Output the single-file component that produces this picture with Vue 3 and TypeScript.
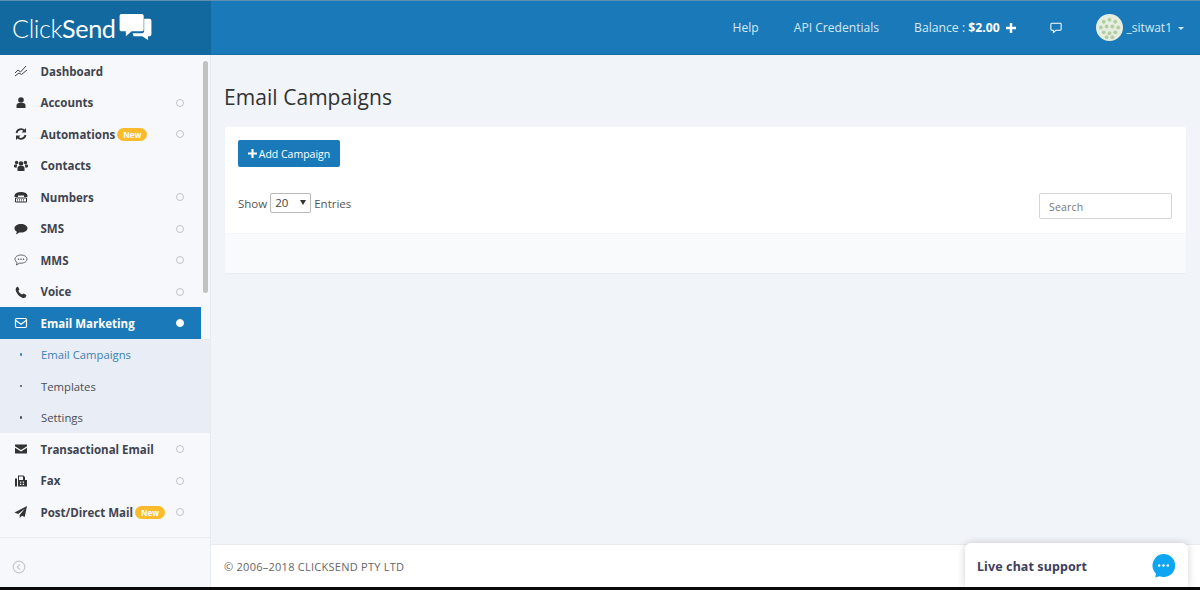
<script setup lang="ts">
interface NavItem {
  label: string
  icon: string
  dot?: boolean
  badge?: boolean
}

const topItems: NavItem[] = [
  { label: 'Dashboard', icon: 'chart' },
  { label: 'Accounts', icon: 'user', dot: true },
  { label: 'Automations', icon: 'refresh', dot: true, badge: true },
  { label: 'Contacts', icon: 'users' },
  { label: 'Numbers', icon: 'phone-box', dot: true },
  { label: 'SMS', icon: 'bubble', dot: true },
  { label: 'MMS', icon: 'bubble-dots', dot: true },
  { label: 'Voice', icon: 'phone', dot: true },
]

const subItems = ['Email Campaigns', 'Templates', 'Settings']

const bottomItems: NavItem[] = [
  { label: 'Transactional Email', icon: 'envelope', dot: true },
  { label: 'Fax', icon: 'fax', dot: true },
  { label: 'Post/Direct Mail', icon: 'plane', dot: true, badge: true },
]

const avatarDots: [number, number][] = [
  [8, 8], [14, 6], [20, 8], [5, 14], [11, 13], [17, 13], [23, 14],
  [8, 19], [14, 20], [20, 19], [11, 24], [17, 24],
]
</script>

<template>
  <div class="page">
    <header class="topbar">
      <div class="brand">
        <span class="logo-text"><span class="thin">Click</span>Send</span>
        <svg class="logo-mark" viewBox="0 0 34 28" width="33" height="27">
          <path d="M26 5h5.500q2 0 2 2v14q0 2-2 2H30v4l-6-4h-9l-1-3h9q3 0 3-3z" fill="#fff" />
          <path d="M2.500 0h21q2 0 2 2v14q0 2-2 2H13l-6 5v-5H2.500q-2 0-2-2V2q0-2 2-2z" fill="#fff" />
        </svg>
      </div>
      <nav class="top-nav">
        <a class="help">Help</a>
        <a>API Credentials</a>
        <a class="balance"><span>Balance : <b>$2.00</b></span>
          <svg viewBox="0 0 10 10" width="10" height="10"><path d="M3.800 0h2.400v3.800H10v2.400H6.200V10H3.800V6.200H0V3.800h3.800z" fill="#fff" /></svg>
        </a>
        <svg class="msg" viewBox="0 0 14 13" width="12" height="12">
          <path d="M2 1h10q1 0 1 1v6q0 1-1 1H7l-3 3V9H2q-1 0-1-1V2q0-1 1-1z" fill="none" stroke="#fff" stroke-width="1.200" stroke-linejoin="round" />
        </svg>
        <div class="user">
          <svg class="avatar" viewBox="0 0 28 28" width="27" height="27">
            <circle cx="14" cy="14" r="14" fill="#e6eee0" />
            <circle v-for="(d, i) in avatarDots" :key="i" :cx="d[0]" :cy="d[1]" r="2" fill="#b5cda3" />
          </svg>
          <span>_sitwat1</span>
          <i class="caret"></i>
        </div>
      </nav>
    </header>

    <div class="body">
      <aside class="sidebar">
        <div class="nav-wrap">
          <ul class="nav">
            <li v-for="item in topItems" :key="item.label" class="row">
              <span class="ico">
                <svg viewBox="0 0 14 14" width="14" height="14">
                  <template v-if="item.icon === 'chart'">
                    <path d="M1 9l3-3 2.500 2L12 2M1 12l4-3 2.500 1.500L13 6" fill="none" stroke="#444" stroke-width="1" />
                  </template>
                  <template v-else-if="item.icon === 'user'">
                    <circle cx="7" cy="4" r="2.800" fill="#333" />
                    <path d="M2.500 12V9.500Q2.500 7 5 7h4q2.500 0 2.500 2.500V12z" fill="#333" />
                  </template>
                  <template v-else-if="item.icon === 'refresh'">
                    <path d="M2.500 6A4.600 4.600 0 0 1 10.500 3.800M11.500 8A4.600 4.600 0 0 1 3.500 10.200" fill="none" stroke="#333" stroke-width="1.800" />
                    <path d="M12 1v4.500H7.500zM2 13V8.500h4.500z" fill="#333" />
                  </template>
                  <template v-else-if="item.icon === 'users'">
                    <circle cx="7" cy="4.500" r="2.300" fill="#333" /><circle cx="2.600" cy="3.500" r="1.700" fill="#333" /><circle cx="11.400" cy="3.500" r="1.700" fill="#333" />
                    <path d="M3.500 12V9q0-2 2-2h3q2 0 2 2v3z" fill="#333" />
                    <path d="M0 8V6.500q0-1 1-1h2L3 6.800 2.300 9zM14 8V6.500q0-1-1-1h-2l0 1.300.7 2.200z" fill="#333" />
                  </template>
                  <template v-else-if="item.icon === 'phone-box'">
                    <path d="M.5 5.500Q1 2 7 2t6.500 3.500V7H10V5.500H4V7H.5z" fill="#333" />
                    <path d="M1.500 8h11v4h-11z" fill="none" stroke="#333" stroke-width="1" />
                    <path d="M3 9.700h8M3 11h8" stroke="#333" stroke-width=".8" stroke-dasharray="1 1" />
                  </template>
                  <template v-else-if="item.icon === 'bubble'">
                    <path d="M7 2c3.600 0 6.500 1.900 6.500 4.300S10.600 10.600 7 10.600c-.6 0-1.200 0-1.700-.1L2 12.500l.8-2.800C1.300 8.900.5 7.700.5 6.300.5 3.900 3.400 2 7 2z" fill="#333" />
                  </template>
                  <template v-else-if="item.icon === 'bubble-dots'">
                    <path d="M7 2c3.400 0 6 1.800 6 4.100s-2.600 4.100-6 4.100H5.500L2.500 12l.6-2.500C1.700 8.700 1 7.500 1 6.100 1 3.800 3.600 2 7 2z" fill="none" stroke="#555" stroke-width=".9" />
                    <circle cx="4.500" cy="6.200" r=".8" fill="#555" /><circle cx="7" cy="6.200" r=".8" fill="#555" /><circle cx="9.500" cy="6.200" r=".8" fill="#555" />
                  </template>
                  <template v-else>
                    <path d="M3.800 1.500l1.700 3-1.200 1.200q.8 2.400 3.800 3.900l1.300-1.200 3 1.700-.7 2.200q-1.300 1.200-3 .6Q3.700 11 1.800 5.800q-.5-1.800.5-3.200z" fill="#333" />
                  </template>
                </svg>
              </span>
              <span class="label">{{ item.label }}</span>
              <span v-if="item.badge" class="badge">New</span>
              <i v-if="item.dot" class="dot"></i>
            </li>

            <li class="row active">
              <span class="ico">
                <svg viewBox="0 0 14 14" width="14" height="14">
                  <rect x="1.500" y="2.500" width="11" height="9" rx="1.200" fill="none" stroke="#fff" stroke-width="1.200" />
                  <path d="M1.800 4.500L7 8.300l5.200-3.800" fill="none" stroke="#fff" stroke-width="1.200" />
                </svg>
              </span>
              <span class="label">Email Marketing</span>
              <i class="dot on"></i>
            </li>

            <li v-for="(sub, i) in subItems" :key="sub" class="row sub" :class="{ current: i === 0 }">
              <span class="bullet"></span>
              <span>{{ sub }}</span>
            </li>

            <li v-for="item in bottomItems" :key="item.label" class="row">
              <span class="ico">
                <svg viewBox="0 0 14 14" width="14" height="14">
                  <template v-if="item.icon === 'envelope'">
                    <path d="M1 2.500h12v1.700L7 8 1 4.200z" fill="#333" />
                    <path d="M1 5.800L7 9.600l6-3.800v5.700H1z" fill="#333" />
                  </template>
                  <template v-else-if="item.icon === 'fax'">
                    <path d="M1 4.500h2v8H1zM4 6V1.500h5.500L11 3v3h2v6.500H4z" fill="#333" />
                    <path d="M5 2.500h4V6H5z" fill="#f6f8fb" />
                    <path d="M6 7.500h1.300v1.200H6zM8.700 7.500H10v1.200H8.700zM6 9.800h1.300V11H6zM8.700 9.800H10V11H8.700z" fill="#f6f8fb" />
                  </template>
                  <template v-else>
                    <path d="M13 1L.5 7.500l3.700 1.600L11 3.500 5.700 10v3l2.200-2.300 2.800 1.200z" fill="#333" />
                  </template>
                </svg>
              </span>
              <span class="label">{{ item.label }}</span>
              <span v-if="item.badge" class="badge">New</span>
              <i v-if="item.dot" class="dot"></i>
            </li>
          </ul>
          <div class="scroll-thumb"></div>
        </div>
        <div class="collapse">
          <svg viewBox="0 0 14 14" width="14" height="14">
            <circle cx="7" cy="7" r="5.800" fill="none" stroke="#c4c8cc" stroke-width="1.200" />
            <path d="M8 4.300L5.300 7 8 9.700" fill="none" stroke="#c4c8cc" stroke-width="1.200" />
          </svg>
        </div>
      </aside>

      <div class="content">
        <main class="main">
          <h1>Email Campaigns</h1>
          <section class="card">
            <div class="card-top">
              <button class="add" type="button">
                <svg viewBox="0 0 10 10" width="9" height="9"><path d="M3.800 0h2.400v3.800H10v2.400H6.200V10H3.800V6.200H0V3.800h3.800z" fill="#fff" /></svg>
                Add Campaign
              </button>
              <div class="tools">
                <div class="show">
                  <span>Show</span>
                  <span class="select">20<i></i></span>
                  <span>Entries</span>
                </div>
                <div class="search">Search</div>
              </div>
            </div>
            <div class="card-foot"></div>
          </section>
        </main>
        <footer class="footer">© 2006–2018 CLICKSEND PTY LTD</footer>
      </div>
    </div>

    <div class="black-strip"></div>

    <div class="chat">
      <span>Live chat support</span>
      <svg viewBox="0 0 26 26" width="25" height="25">
        <path d="M13 1a12 12 0 1 1-4.200 23.200L4.500 25.500l.6-4.100A12 12 0 0 1 13 1z" fill="#0ea5f2" />
        <circle cx="8.500" cy="13" r="1.300" fill="#fff" /><circle cx="13" cy="13" r="1.300" fill="#fff" /><circle cx="17.500" cy="13" r="1.300" fill="#fff" />
      </svg>
    </div>
  </div>
</template>

<style scoped>
.page {
  position: relative;
  width: 1200px;
  height: 590px;
  overflow: hidden;
  display: flex;
  flex-direction: column;
  font-family: "Open Sans", "Liberation Sans", sans-serif;
  background: #f1f4f9;
  color: #333;
}

.topbar {
  height: 55px;
  flex: none;
  display: flex;
  background: #1a7ab9;
  border-top: 1px solid #5d8fb0;
  border-bottom: 1px solid #17699f;
  box-sizing: border-box;
}
.brand {
  width: 211px;
  flex: none;
  display: flex;
  align-items: center;
  gap: 3px;
  padding-left: 12px;
  box-sizing: border-box;
  background: #12699f;
}
.logo-text {
  font-family: Lato, sans-serif;
  font-size: 25.200px;
  letter-spacing: -.4px;
  color: #fff;
  font-weight: 400;
  padding-top: 1px;
}
.thin { font-weight: 300; }
.top-nav {
  flex: 1;
  display: flex;
  align-items: center;
  justify-content: flex-end;
  padding-right: 16px;
  font-size: 12.100px;
  color: #d6e8f5;
}
.top-nav > a { margin-right: 35px; }
.top-nav > .balance { margin-right: 34px; }
.balance { font-size: 12.200px; display: flex; align-items: center; gap: 6px; }
.balance b { color: #fff; font-weight: 700; }
.msg { margin-right: 34px; }
.user { display: flex; align-items: center; gap: 3px; font-size: 12px; }
.avatar { margin-right: 1px; }
.caret {
  width: 0;
  height: 0;
  margin-left: 3px;
  margin-top: 2px;
  border: 3px solid transparent;
  border-top: 3px solid #d6e8f5;
  border-bottom: 0;
}

.body { flex: 1; display: flex; min-height: 0; }

.sidebar {
  width: 211px;
  flex: none;
  display: flex;
  flex-direction: column;
  background: #f7f8fb;
  border-right: 1px solid #e8ebf0;
  box-sizing: border-box;
}
.nav-wrap {
  position: relative;
  height: 483px;
  flex: none;
  overflow: hidden;
  border-bottom: 1px solid #e9ecf0;
  box-sizing: border-box;
}
.nav { list-style: none; margin: 0; padding: .25px 0 0; width: 201px; }
.row {
  display: flex;
  align-items: center;
  height: 31.500px;
  padding-left: 14px;
  box-sizing: border-box;
  font-size: 11.500px;
  font-weight: 700;
  color: #3f4450;
  position: relative;
  white-space: nowrap;
}
.ico { width: 26.500px; flex: none; display: flex; }
.badge {
  margin-left: 2px;
  height: 13px;
  line-height: 13px;
  padding: 0 6px;
  border-radius: 7px;
  background: #fbbb2c;
  color: #fff;
  font-size: 8px;
  font-weight: 700;
}
.dot {
  position: absolute;
  right: 17.500px;
  top: 50%;
  margin-top: -4px;
  width: 8px;
  height: 8px;
  border-radius: 50%;
  border: 1px solid #bfc3c7;
  box-sizing: border-box;
}
.dot.on { background: #fff; border-color: #fff; }
.active { background: #1a7ab9; color: #fff; }
.sub {
  background: #e9edf5;
  font-size: 11.300px;
  font-weight: 400;
  color: #4a4d55;
  width: 211px;
}
.sub.current { color: #3b80b3; }
.bullet {
  width: 2.500px;
  height: 2.500px;
  border-radius: 50%;
  background: currentColor;
  margin: 0 19px 0 5.500px;
  flex: none;
}
.scroll-thumb {
  position: absolute;
  left: 203px;
  top: 6px;
  width: 5px;
  height: 232px;
  border-radius: 3px;
  background: #c1c1c1;
}
.collapse { flex: 1; display: flex; align-items: center; padding: 8px 0 0 12px; }

.content { flex: 1; display: flex; flex-direction: column; min-width: 0; }
.main { flex: 1; padding: 0 14px; min-height: 0; }
h1 {
  margin: 0 0 0 -1px;
  padding-top: 28px;
  height: 72px;
  box-sizing: border-box;
  font-size: 21px;
  font-weight: 400;
  line-height: 29px;
  letter-spacing: .05px;
  color: #333;
}
.card {
  background: #fff;
  height: 146px;
  display: flex;
  flex-direction: column;
  border-radius: 2px;
  box-shadow: 0 1px 2px rgba(0, 0, 0, .04);
}
.card-top { height: 106px; padding: 13px 14px 0 13px; box-sizing: border-box; flex: none; }
.add {
  display: flex;
  align-items: center;
  justify-content: center;
  gap: 2px;
  width: 102px;
  height: 27px;
  padding: 0;
  border: 0;
  border-radius: 2px;
  background: #1a7ab9;
  color: #fff;
  font: 400 10.500px "Open Sans", sans-serif;
}
.tools {
  display: flex;
  justify-content: space-between;
  align-items: flex-start;
  margin-top: 26px;
}
.show { display: flex; align-items: center; gap: 3px; font-size: 11.500px; color: #555; height: 20px; }
.select {
  position: relative;
  width: 41px;
  height: 20px;
  line-height: 18px;
  padding-left: 4px;
  box-sizing: border-box;
  border: 1px solid #b9b9b9;
  border-radius: 2px;
  color: #444;
  background: #fff;
}
.select i {
  position: absolute;
  right: 4px;
  top: 6px;
  border: 3.500px solid transparent;
  border-top: 5px solid #333;
  border-bottom: 0;
}
.search {
  width: 133px;
  height: 26px;
  line-height: 27px;
  padding-left: 9px;
  box-sizing: border-box;
  border: 1px solid #d5d5d5;
  border-radius: 2px;
  font-size: 10.500px;
  letter-spacing: .2px;
  color: #777;
}
.card-foot { flex: 1; background: #f8fafc; border-top: 1px solid #f3f5f8; }
.footer {
  height: 43px;
  flex: none;
  background: #fff;
  padding-left: 13px;
  line-height: 43px;
  font-size: 11px;
  letter-spacing: .26px;
  color: #666;
  border-top: 1px solid #e7eaee;
  box-sizing: border-box;
}
.black-strip { height: 3px; flex: none; background: #0a0a0a; }

.chat {
  position: absolute;
  left: 965px;
  bottom: 3px;
  width: 223px;
  height: 44px;
  display: flex;
  align-items: center;
  justify-content: space-between;
  padding: 0 12px;
  box-sizing: border-box;
  background: #fff;
  border-radius: 6px 6px 0 0;
  box-shadow: 0 0 8px rgba(0, 0, 0, .18);
  font-family: "Noto Sans", sans-serif;
  font-size: 12.500px;
  font-weight: 700;
  letter-spacing: .1px;
  color: #3e3e5c;
}
.chat span { padding-top: 2px; }
</style>

<style>
body { margin: 0; }
</style>
